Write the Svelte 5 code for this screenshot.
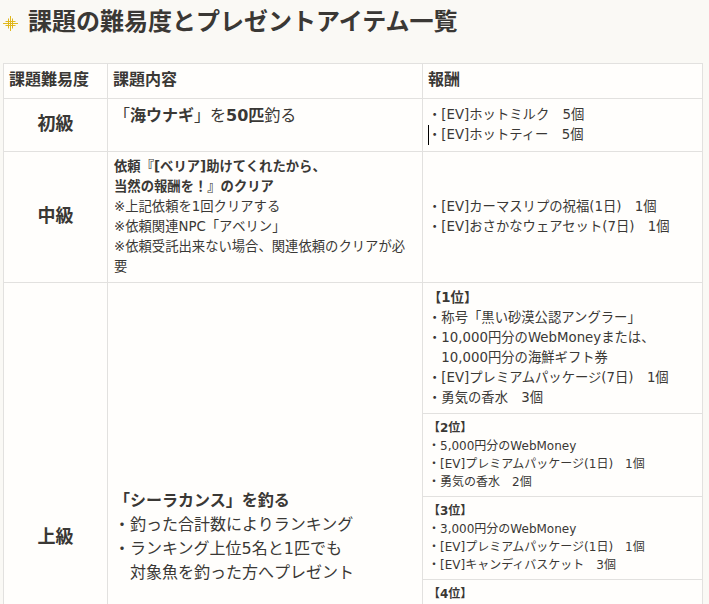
<script>
	// Reward cells of the 上級 row
	const ranks = [
		{
			title: '【1位】',
			large: true,
			lines: ['・称号「黒い砂漠公認アングラー」', '・10,000円分のWebMoneyまたは、', '　10,000円分の海鮮ギフト券', '・[EV]プレミアムパッケージ(7日)　1個', '・勇気の香水　3個']
		},
		{
			title: '【2位】',
			lines: ['・5,000円分のWebMoney', '・[EV]プレミアムパッケージ(1日)　1個', '・勇気の香水　2個']
		},
		{
			title: '【3位】',
			lines: ['・3,000円分のWebMoney', '・[EV]プレミアムパッケージ(1日)　1個', '・[EV]キャンディバスケット　3個']
		}
	];
</script>

<div class="page">
	<h2 class="title">
		<svg class="mark" width="15" height="15" viewBox="0 0 15 15" aria-hidden="true">
			<path d="M0 7.5h15M7.5 0v15M2.5 5.5h10M2.5 9.5h10M5.5 2.5v10M9.5 2.5v10" fill="none" stroke="#e0b71c" stroke-width="1" />
		</svg>
		課題の難易度とプレゼントアイテム一覧
	</h2>

	<table>
		<colgroup>
			<col class="c1" />
			<col class="c2" />
			<col />
		</colgroup>
		<thead>
			<tr>
				<th>課題難易度</th>
				<th>課題内容</th>
				<th>報酬</th>
			</tr>
		</thead>
		<tbody>
			<tr>
				<td class="level">初級</td>
				<td class="task first">「<b>海ウナギ</b>」を<b>50匹</b>釣る</td>
				<td class="reward first">
					・[EV]ホットミルク　5個<br />
					<span class="caret"></span>・[EV]ホットティー　5個
				</td>
			</tr>
			<tr>
				<td class="level">中級</td>
				<td>
					<b>依頼『[ベリア]助けてくれたから、<br />当然の報酬を！』のクリア</b><br />
					※上記依頼を1回クリアする<br />
					※依頼関連NPC「アベリン」<br />
					※依頼受託出来ない場合、関連依頼のクリアが必要
				</td>
				<td class="reward">
					・[EV]カーマスリプの祝福(1日)　1個<br />
					・[EV]おさかなウェアセット(7日)　1個
				</td>
			</tr>
			{#each ranks as rank, i}
				<tr>
					{#if i === 0}
						<td class="level deep" rowspan="4">上級</td>
						<td class="task ranking" rowspan="4">
							<b>「シーラカンス」を釣る</b><br />
							・釣った合計数によりランキング<br />
							・ランキング上位5名と1匹でも<br />
							　対象魚を釣った方へプレゼント
						</td>
					{/if}
					<td class="reward" class:small={!rank.large}>
						<b>{rank.title}</b><br />
						{#each rank.lines as line}
							{line}<br />
						{/each}
					</td>
				</tr>
			{/each}
			<tr>
				<td class="reward small last"><b>【4位】</b></td>
			</tr>
		</tbody>
	</table>
</div>

<style>
	:global(body) {
		background: #faf9f5;
		overflow: hidden;
	}

	.page {
		padding: 0 6px 0 3px;
		color: #3a3835;
		font-family: "DejaVu Sans", "Noto Sans CJK JP", sans-serif;
		font-size: 13.33px;
		line-height: 20px;
	}

	.title {
		display: flex;
		align-items: flex-start;
		gap: 10px;
		height: 44px;
		margin: 0 0 19px;
		font-size: 24px;
		font-weight: 700;
		line-height: 44px;
	}

	.mark {
		flex-shrink: 0;
		margin-top: 16px;
	}

	table {
		width: 700px;
		table-layout: fixed;
		border-collapse: collapse;
		background: #fffefc;
	}

	.c1 {
		width: 104px;
	}

	.c2 {
		width: 315px;
	}

	th,
	td {
		border: 1px solid #e2e1df;
		padding: 5px 6px;
		text-align: left;
		vertical-align: middle;
	}

	th {
		height: 24px;
		padding: 4px 5px 6px;
		font-size: 16px;
	}

	.level {
		padding-bottom: 8px;
		text-align: center;
		font-size: 18px;
		font-weight: 700;
	}

	.level.deep {
		padding-bottom: 4px;
	}

	.reward {
		padding-left: 5px;
	}

	.reward.first {
		padding-top: 6px;
		padding-bottom: 6px;
	}

	.task.first {
		padding-top: 7px;
		vertical-align: top;
	}

	.task {
		font-size: 16px;
	}

	.ranking {
		line-height: 24px;
	}

	.small {
		font-size: 12px;
		line-height: 18px;
		vertical-align: top;
	}

	.last {
		height: 200px;
	}

	.caret {
		position: absolute;
		width: 1px;
		height: 20px;
		background: #000;
	}
</style>
